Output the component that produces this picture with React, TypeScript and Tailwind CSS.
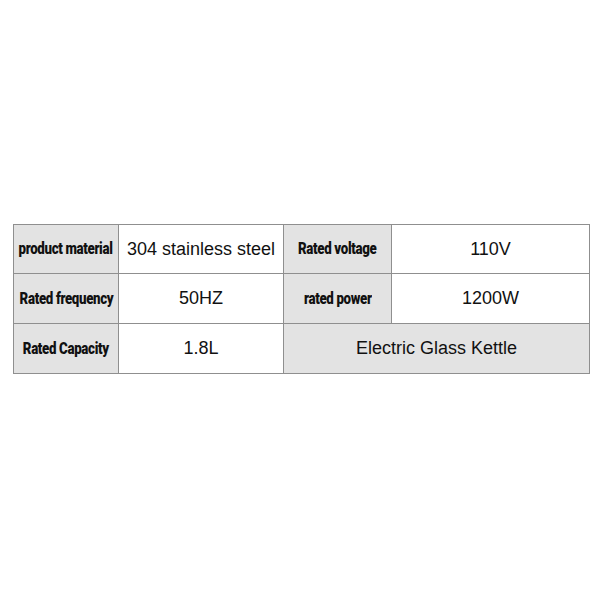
const cell = "border border-[#8f8f8f] text-center align-middle text-[#111]";
const value = `${cell} text-[18px] font-['Liberation_Sans',Arial,sans-serif]`;

function Label({ children }: { children: React.ReactNode }) {
  return (
    <td className={`${cell} bg-[#e3e3e3] p-0`}>
      <div className="flex justify-center">
        <span className="inline-block shrink-0 whitespace-nowrap scale-x-[0.83] text-[16px] font-black tracking-[-0.4px] font-['Roboto',sans-serif]">
          {children}
        </span>
      </div>
    </td>
  );
}

export default function App() {
  return (
    <div className="w-[600px] h-[600px] bg-white pt-[224px] pl-[13px]">
      <table className="border-collapse table-fixed w-[576px]">
        <colgroup>
          <col className="w-[105px]" />
          <col className="w-[165px]" />
          <col className="w-[108px]" />
          <col className="w-[198px]" />
        </colgroup>
        <tbody>
          <tr className="h-[49px]">
            <Label>product material</Label>
            <td className={`${value} bg-white`}>304 stainless steel</td>
            <Label>Rated voltage</Label>
            <td className={`${value} bg-white`}>110V</td>
          </tr>
          <tr className="h-[50px]">
            <Label>Rated frequency</Label>
            <td className={`${value} bg-white`}>50HZ</td>
            <Label>rated power</Label>
            <td className={`${value} bg-white`}>1200W</td>
          </tr>
          <tr className="h-[50px]">
            <Label>Rated Capacity</Label>
            <td className={`${value} bg-white`}>1.8L</td>
            <td colSpan={2} className={`${value} bg-[#e3e3e3]`}>
              Electric Glass Kettle
            </td>
          </tr>
        </tbody>
      </table>
    </div>
  );
}
